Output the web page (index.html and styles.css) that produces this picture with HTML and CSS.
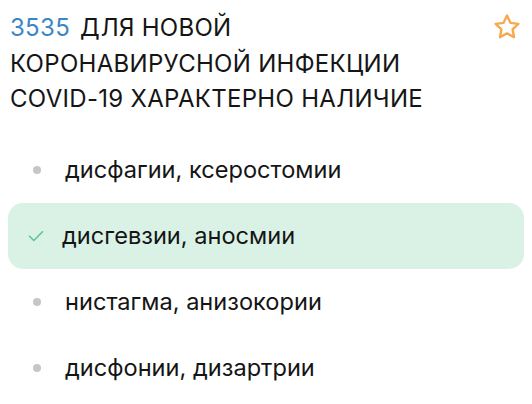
FILE: index.html
```html
<!DOCTYPE html>
<html lang="ru">
<head>
    <meta charset="UTF-8">
    <meta name="viewport" content="width=device-width, initial-scale=1.0">
    <title>Вопрос 3535</title>
    <link rel="stylesheet" href="styles.css">
</head>
<body>

<!-- Question header with favourite star -->
<div class="question">
    <h1 class="question-title">
        <span class="question-number">3535</span> ДЛЯ НОВОЙ КОРОНАВИРУСНОЙ ИНФЕКЦИИ COVID-19 ХАРАКТЕРНО НАЛИЧИЕ
    </h1>
    <button class="fav-btn" aria-label="В избранное">
        <svg width="30" height="30" viewBox="0 0 24 24" fill="none" stroke="#f6a94f" stroke-width="1.9" stroke-linejoin="round" stroke-linecap="round">
            <path d="M12 2.8l2.75 5.85 6.35.8-4.66 4.4 1.2 6.3L12 17.07l-5.64 3.08 1.2-6.3L2.9 9.45l6.35-.8z"/>
        </svg>
    </button>
</div>

<!-- Answer options -->
<ul class="options">
    <li class="option">
        <span class="marker"><span class="dot"></span></span>
        <span class="option-text">дисфагии, ксеростомии</span>
    </li>
    <li class="option option-correct">
        <span class="marker">
            <svg width="16" height="12" viewBox="0 0 16 12" fill="none" stroke="#5cc597" stroke-width="1.6" stroke-linecap="round" stroke-linejoin="round">
                <path d="M1.5 6.2l4.3 4.3L14.5 1.8"/>
            </svg>
        </span>
        <span class="option-text">дисгевзии, аносмии</span>
    </li>
    <li class="option">
        <span class="marker"><span class="dot"></span></span>
        <span class="option-text">нистагма, анизокории</span>
    </li>
    <li class="option">
        <span class="marker"><span class="dot"></span></span>
        <span class="option-text">дисфонии, дизартрии</span>
    </li>
</ul>

</body>
</html>
```

FILE: styles.css
```css
body {
    font-family: 'Inter', 'Noto Sans', sans-serif;
    margin: 0;
    padding: 0;
    background-color: #fff;
    color: #151515;
}

/* Question header */
.question {
    display: flex;
    align-items: flex-start;
    justify-content: space-between;
    padding: 10px 10px 0 10px;
}

.question-title {
    margin: 0;
    font-size: 24px;
    font-weight: 400;
    line-height: 35.5px;
    letter-spacing: 0.3px;
    max-width: 440px;
}

.question-number {
    color: #3d86c6;
    margin-right: 3px;
}

.fav-btn {
    background: none;
    border: none;
    padding: 0;
    margin: 2px 0 0 0;
    cursor: pointer;
}

/* Options list */
.options {
    list-style: none;
    margin: 20px 8px 0 8px;
    padding: 0;
}

.option {
    display: flex;
    align-items: center;
    gap: 20px;
    height: 66px;
    padding: 0 20px;
    border-radius: 15px;
    font-size: 23.6px;
}

.option-correct {
    background-color: #d9f2e5;
    gap: 17px;
}

.marker {
    display: flex;
    align-items: center;
    justify-content: center;
    width: 17px;
}

.option-correct .marker {
    justify-content: flex-start;
}

.dot {
    width: 8px;
    height: 8px;
    border-radius: 50%;
    background-color: #c6c6c6;
}
```
